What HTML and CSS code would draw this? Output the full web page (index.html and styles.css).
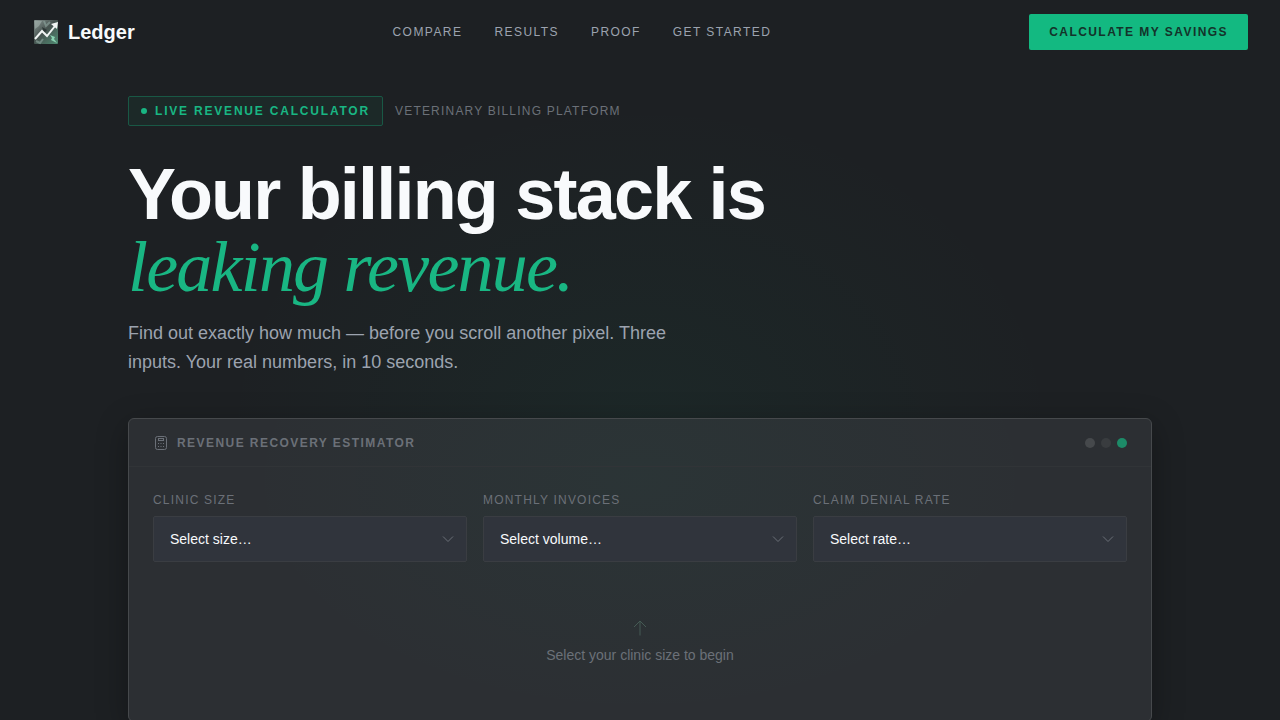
FILE: index.html
```html
<!DOCTYPE html>
<html lang="en">
<head>
    <meta charset="UTF-8">
    <meta name="viewport" content="width=device-width, initial-scale=1.0">
    <title>Ledger</title>
    <link rel="stylesheet" href="styles.css">
</head>
<body>
    <header class="navbar">
        <a class="brand" href="#">
            <svg class="brand-logo" viewBox="0 0 28 28" aria-hidden="true">
                <defs>
                    <linearGradient id="logoBg" x1="0" y1="0" x2="1" y2="1">
                        <stop offset="0" stop-color="#8b9895"/>
                        <stop offset="0.45" stop-color="#46524f"/>
                        <stop offset="1" stop-color="#4f8a72"/>
                    </linearGradient>
                </defs>
                <rect x="2" y="2" width="24" height="24" rx="1" fill="url(#logoBg)"/>
                <path d="M3 3h7l-3 5-4 3z" fill="#a3b3ae" opacity="0.6"/>
                <path d="M12 3l2 5 4-4M4 23l4 2 3-4" fill="none" stroke="#8fa7a0" stroke-width="2" opacity="0.6"/>
                <path d="M10 9l5 3-3 3z" fill="#2d3837"/>
                <path d="M18 17l5 2-1 2 3 4-6-3 1-2z" fill="#8ad3b2"/>
                <path d="M3 21l7-8 5 5 8-10" fill="none" stroke="#f0f4f3" stroke-width="2"/>
                <path d="M19 6l7-2-1 7z" fill="#f0f4f3"/>
            </svg>
            <span>Ledger</span>
        </a>
        <nav class="nav-links">
            <a href="#compare">Compare</a>
            <a href="#results">Results</a>
            <a href="#proof">Proof</a>
            <a href="#start">Get Started</a>
        </nav>
        <button type="button" class="btn">Calculate My Savings</button>
    </header>

    <main class="hero">
        <div class="container">
            <div class="tags">
                <span class="badge"><span class="badge-dot"></span>Live Revenue Calculator</span>
                <span class="tagline">Veterinary Billing Platform</span>
            </div>

            <h1>Your billing stack is <em>leaking revenue.</em></h1>
            <p class="lead">Find out exactly how much — before you scroll another pixel. Three inputs. Your real numbers, in 10 seconds.</p>

            <section class="card">
                <div class="card-header">
                    <svg class="calc-icon" viewBox="0 0 16 16" aria-hidden="true">
                        <rect x="2.5" y="1.5" width="11" height="13" rx="2"/>
                        <rect x="5.5" y="3.5" width="5" height="2"/>
                        <path d="M5 8.5h1M7.5 8.5h1M10 8.5h1M5 11.5h1M7.5 11.5h1M10 11.5h1"/>
                    </svg>
                    <h2>Revenue Recovery Estimator</h2>
                    <div class="dots">
                        <span class="dot"></span>
                        <span class="dot dot-dim"></span>
                        <span class="dot dot-on"></span>
                    </div>
                </div>

                <form class="card-body" id="estimatorForm">
                    <div class="fields">
                        <div class="form-group">
                            <label for="clinic_size">Clinic Size</label>
                            <div class="select-wrap">
                                <select id="clinic_size">
                                    <option value="">Select size…</option>
                                </select>
                                <svg class="chevron" viewBox="0 0 12 12" aria-hidden="true"><path d="M1 3.5l5 5 5-5"/></svg>
                            </div>
                        </div>
                        <div class="form-group">
                            <label for="monthly_invoices">Monthly Invoices</label>
                            <div class="select-wrap">
                                <select id="monthly_invoices">
                                    <option value="">Select volume…</option>
                                </select>
                                <svg class="chevron" viewBox="0 0 12 12" aria-hidden="true"><path d="M1 3.5l5 5 5-5"/></svg>
                            </div>
                        </div>
                        <div class="form-group">
                            <label for="denial_rate">Claim Denial Rate</label>
                            <div class="select-wrap">
                                <select id="denial_rate">
                                    <option value="">Select rate…</option>
                                </select>
                                <svg class="chevron" viewBox="0 0 12 12" aria-hidden="true"><path d="M1 3.5l5 5 5-5"/></svg>
                            </div>
                        </div>
                    </div>

                    <div class="empty">
                        <svg class="arrow-up" viewBox="0 0 20 20" aria-hidden="true"><path d="M10 17.5V3M4 9l6-6 6 6"/></svg>
                        <p>Select your clinic size to begin</p>
                    </div>
                </form>
            </section>
        </div>
    </main>
</body>
</html>
```
FILE: styles.css
```css
* {
    margin: 0;
    padding: 0;
    box-sizing: border-box;
}
body {
    font-family: "Liberation Sans", Arial, sans-serif;
    background-color: #1d2023;
    color: #f8fafc;
    min-height: 100vh;
    overflow-x: hidden;
    background-image: radial-gradient(ellipse 420px 330px at 50% 430px, rgba(16, 185, 129, 0.05), transparent);
}
a {
    color: inherit;
    text-decoration: none;
}
.navbar {
    display: flex;
    justify-content: space-between;
    align-items: center;
    height: 64px;
    padding: 0 32px;
}
.brand {
    display: flex;
    align-items: center;
    gap: 8px;
    font-size: 20px;
    font-weight: bold;
}
.brand-logo {
    width: 28px;
    height: 28px;
}
.nav-links {
    display: flex;
    gap: 32px;
    font-size: 12px;
    letter-spacing: 0.12em;
    text-transform: uppercase;
    color: #9ca3af;
}
.btn {
    height: 36px;
    padding: 0 20px;
    border: none;
    border-radius: 2px;
    background-color: #13b981;
    color: #14332a;
    font-family: inherit;
    font-size: 12px;
    font-weight: bold;
    letter-spacing: 0.12em;
    text-transform: uppercase;
    cursor: pointer;
}
.hero {
    padding: 32px;
}
.container {
    max-width: 1024px;
    margin: 0 auto;
}
.tags {
    display: flex;
    align-items: center;
    gap: 12px;
    margin-bottom: 32px;
    font-size: 12px;
    text-transform: uppercase;
}
.badge {
    display: flex;
    align-items: center;
    gap: 8px;
    height: 30px;
    padding: 0 12px;
    border: 1px solid #195845;
    border-radius: 2px;
    background-color: rgba(16, 185, 129, 0.06);
    color: #19b683;
    font-weight: bold;
    letter-spacing: 0.15em;
}
.badge-dot {
    width: 6px;
    height: 6px;
    border-radius: 50%;
    background-color: #19b683;
}
.tagline {
    letter-spacing: 0.1em;
    color: #6b7078;
}
h1 {
    max-width: 768px;
    margin-bottom: 15px;
    font-size: 72px;
    line-height: 73px;
    letter-spacing: -0.025em;
}
h1 em {
    display: block;
    font-family: "Liberation Serif", "Times New Roman", serif;
    font-weight: normal;
    color: #19b683;
}
.lead {
    max-width: 576px;
    margin-bottom: 41px;
    font-size: 18px;
    line-height: 29px;
    color: #9ca3af;
}
.card {
    border: 1px solid #46494c;
    border-radius: 6px;
    background-color: #2c2f33;
    background-image: radial-gradient(ellipse 400px 240px at 50% 60px, rgba(16, 185, 129, 0.04), transparent);
    box-shadow: 0 8px 32px rgba(0, 0, 0, 0.3);
}
.card-header {
    display: flex;
    align-items: center;
    gap: 8px;
    height: 48px;
    padding: 0 24px;
    border-bottom: 1px solid #313437;
    color: #6b7078;
}
.card-header h2 {
    font-size: 12px;
    letter-spacing: 0.12em;
    text-transform: uppercase;
}
.calc-icon {
    width: 16px;
    height: 16px;
    fill: none;
    stroke: currentColor;
}
.dots {
    display: flex;
    gap: 6px;
    margin-left: auto;
}
.dot {
    width: 10px;
    height: 10px;
    border-radius: 50%;
    background-color: #46494c;
}
.dot-dim {
    background-color: #393c3f;
}
.dot-on {
    background-color: #1d8b68;
}
.card-body {
    padding: 24px;
}
.fields {
    display: grid;
    grid-template-columns: repeat(3, 1fr);
    gap: 16px;
}
.form-group label {
    display: block;
    margin-bottom: 6px;
    font-size: 12px;
    line-height: 19px;
    letter-spacing: 0.1em;
    text-transform: uppercase;
    color: #6b7078;
}
.select-wrap {
    display: grid;
    align-items: center;
}
.select-wrap select,
.chevron {
    grid-area: 1 / 1;
}
select {
    width: 100%;
    height: 46px;
    padding: 0 40px 0 16px;
    border: 1px solid #3a3d42;
    border-radius: 2px;
    background-color: #30343c;
    color: #f8fafc;
    font-family: inherit;
    font-size: 14px;
    appearance: none;
}
.chevron {
    justify-self: end;
    width: 12px;
    height: 12px;
    margin-right: 13px;
    fill: none;
    stroke: #6b7078;
    pointer-events: none;
}
.empty {
    display: flex;
    flex-direction: column;
    align-items: center;
    gap: 7px;
    margin-top: 24px;
    padding: 32px 16px;
    font-size: 14px;
    line-height: 20px;
    color: #6b7078;
}
.arrow-up {
    width: 20px;
    height: 20px;
    fill: none;
    stroke: #455b54;
}
```
